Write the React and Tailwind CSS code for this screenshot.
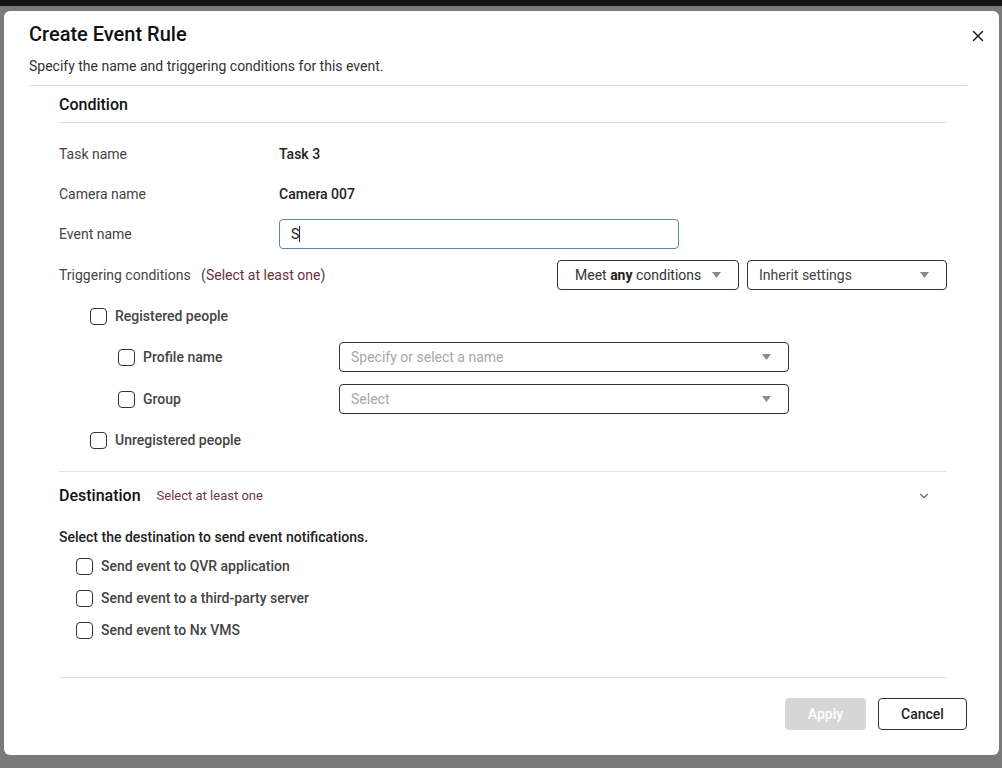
import { X, ChevronDown } from 'lucide-react';

function Caret() {
  return (
    <svg width="9" height="6" viewBox="0 0 9 6" className="shrink-0">
      <path d="M0 0 L9 0 L4.5 6 Z" fill="#8a8a8a" />
    </svg>
  );
}

function Checkbox() {
  return <span className="inline-block w-[17px] h-[17px] rounded-[4px] border-[1.5px] border-[#333] bg-white shrink-0" />;
}

function SelectBox({ placeholder, className = '' }) {
  return (
    <div className={`flex items-center justify-between h-[30px] rounded-[4px] border border-[#333] pl-[11px] pr-[17px] ${className}`}>
      <span className="text-[14px] text-[#a8a8a8]">{placeholder}</span>
      <Caret />
    </div>
  );
}

function InfoRow({ label, children }) {
  return (
    <div className="flex items-center h-[40px]">
      <span className="w-[220px] text-[14px] text-[#444]">{label}</span>
      {children}
    </div>
  );
}

export default function App() {
  const destinations = ['Send event to QVR application', 'Send event to a third-party server', 'Send event to Nx VMS'];

  return (
    <div className="relative w-[1002px] h-[768px] overflow-hidden bg-[#7a7a7a]" style={{ fontFamily: 'Roboto, "Noto Sans", sans-serif' }}>
      <div className="h-[6px] bg-[#141418]" />

      {/* modal */}
      <div className="absolute left-[4px] top-[11px] w-[995px] h-[744px] bg-white rounded-[6px] flex flex-col pl-[25px] pr-[32px] pt-[9px]">
        <div className="flex items-center justify-between h-[28px]">
          <h1 className="text-[20px] font-medium text-[#111]">Create Event Rule</h1>
          <X size={18} strokeWidth={2} className="text-[#222] -mr-[20px] mt-[4px]" />
        </div>
        <p className="mt-[8px] text-[14px] leading-[20px] text-[#333]">Specify the name and triggering conditions for this event.</p>
        <div className="mt-[9px] border-t border-[#dcdcdc]" />

        <div className="ml-[30px] mr-[20px]">
          {/* Condition */}
          <div className="pt-[7px] pb-[5px] border-b border-[#dcdcdc]">
            <h2 className="text-[16px] leading-[24px] font-medium text-[#111]">Condition</h2>
          </div>

          <div className="pt-[11px]">
            <InfoRow label="Task name">
              <span className="text-[14px] font-medium text-[#222]">Task 3</span>
            </InfoRow>
            <InfoRow label="Camera name">
              <span className="text-[14px] font-medium text-[#222]">Camera 007</span>
            </InfoRow>
            <InfoRow label="Event name">
              <div className="flex items-center w-[400px] h-[30px] rounded-[4px] border border-[#5d88aa] px-[11px]">
                <span className="text-[14px] text-[#222]">S</span>
                <span className="w-px h-[16px] bg-[#222]" />
              </div>
            </InfoRow>
            <div className="flex items-center h-[42px]">
              <span className="text-[14px] text-[#444]">
                Triggering conditions <span className="ml-[7px]">(<span className="text-[#6b2e3b]">Select at least one</span>)</span>
              </span>
              <div className="ml-auto flex gap-[8px]">
                <div className="flex items-center justify-between w-[182px] h-[30px] rounded-[4px] border border-[#333] pl-[17px] pr-[17px]">
                  <span className="text-[14px] text-[#333]">Meet <b className="font-bold text-[#222]">any</b> conditions</span>
                  <Caret />
                </div>
                <div className="flex items-center justify-between w-[200px] h-[30px] rounded-[4px] border border-[#333] pl-[11px] pr-[17px]">
                  <span className="text-[14px] text-[#444]">Inherit settings</span>
                  <Caret />
                </div>
              </div>
            </div>
          </div>

          {/* people */}
          <div className="pl-[31px]">
            <div className="flex items-center gap-[8px] h-[40px]">
              <Checkbox />
              <span className="text-[14px] font-medium text-[#444]">Registered people</span>
            </div>
            <div className="pt-[6px] pl-[28px] flex flex-col gap-[12px]">
              <div className="flex items-center">
                <div className="flex items-center gap-[8px] w-[221px]">
                  <Checkbox />
                  <span className="text-[14px] font-medium text-[#444]">Profile name</span>
                </div>
                <SelectBox placeholder="Specify or select a name" className="w-[450px]" />
              </div>
              <div className="flex items-center">
                <div className="flex items-center gap-[8px] w-[221px]">
                  <Checkbox />
                  <span className="text-[14px] font-medium text-[#444]">Group</span>
                </div>
                <SelectBox placeholder="Select" className="w-[450px]" />
              </div>
            </div>
            <div className="flex items-center gap-[8px] h-[52px]">
              <Checkbox />
              <span className="text-[14px] font-medium text-[#444]">Unregistered people</span>
            </div>
          </div>

          {/* Destination */}
          <div className="mt-[5px] border-t border-[#e2e2e2]">
            <div className="flex items-center h-[48px]">
              <h2 className="text-[16px] font-medium text-[#111]">Destination</h2>
              <span className="ml-[16px] text-[13px] text-[#6e3a48]">Select at least one</span>
              <ChevronDown size={14} strokeWidth={2} className="ml-auto mr-[16px] text-[#666]" />
            </div>
            <p className="mt-[7px] text-[14px] leading-[20px] font-medium text-[#222]">Select the destination to send event notifications.</p>
            <div className="pl-[17px] pt-[3px] flex flex-col">
              {destinations.map((d) => (
                <div key={d} className="flex items-center gap-[8px] h-[32px]">
                  <Checkbox />
                  <span className="text-[14px] font-medium text-[#444]">{d}</span>
                </div>
              ))}
            </div>
          </div>
        </div>

        <div className="mt-[31px] ml-[30px] mr-[20px] border-t border-[#e2e2e2]" />

        <div className="mt-[20px] flex justify-end gap-[12px]">
          <button className="w-[81px] h-[32px] rounded-[4px] bg-[#d6d6d6] text-white text-[14px] font-medium">Apply</button>
          <button className="w-[89px] h-[32px] rounded-[4px] border border-[#333] bg-white text-[#222] text-[14px] font-medium">Cancel</button>
        </div>
      </div>
    </div>
  );
}
